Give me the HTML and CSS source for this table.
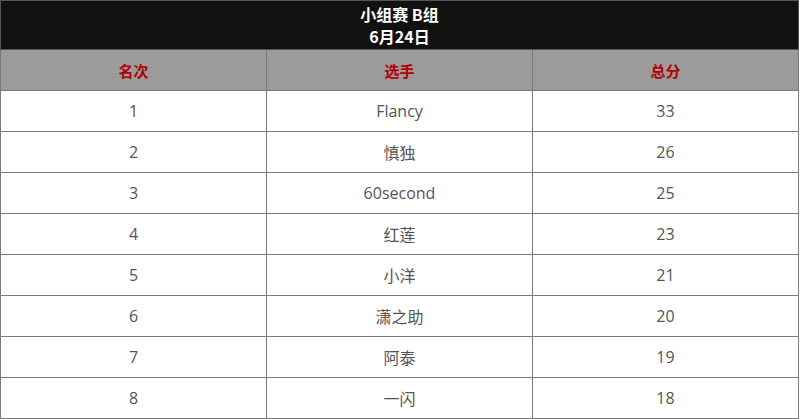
FILE: index.html
```html
<!DOCTYPE html>
<html lang="zh">
<head>
<meta charset="utf-8">
<link rel="stylesheet" href="styles.css">
</head>
<body>
<table class="standings">
  <thead>
    <tr class="title-row"><th colspan="3">小组赛 B组<br>6月24日</th></tr>
    <tr class="col-row"><th>名次</th><th>选手</th><th>总分</th></tr>
  </thead>
  <tbody>
    <tr><td>1</td><td>Flancy</td><td>33</td></tr>
    <tr><td>2</td><td>慎独</td><td>26</td></tr>
    <tr><td>3</td><td>60second</td><td>25</td></tr>
    <tr><td>4</td><td>红莲</td><td>23</td></tr>
    <tr><td>5</td><td>小洋</td><td>21</td></tr>
    <tr><td>6</td><td>潇之助</td><td>20</td></tr>
    <tr><td>7</td><td>阿泰</td><td>19</td></tr>
    <tr><td>8</td><td>一闪</td><td>18</td></tr>
  </tbody>
</table>
</body>
</html>
```
FILE: styles.css
```css
html, body { margin: 0; padding: 0; background: #fff; }
body { font-family: "Open Sans", "Noto Sans CJK SC", sans-serif; }
.standings {
  width: 799px;
  border-collapse: collapse;
  table-layout: fixed;
  border: 1px solid #7a7a7a;
}
.standings th, .standings td {
  border: 1px solid #7a7a7a;
  text-align: center;
  padding: 0;
}
.title-row th {
  background: #111;
  color: #fff;
  font-family: "Noto Sans CJK SC", sans-serif;
  font-weight: 700;
  font-size: 16px;
  line-height: 22px;
  height: 48px;
  padding: 0;
  border-color: #555;
}
.col-row th {
  background: #9b9b9b;
  color: #b00000;
  font-family: "Noto Sans CJK SC", sans-serif;
  font-weight: 700;
  font-size: 15px;
  height: 40px;
  width: 33.33%;
}
.standings td {
  height: 40px;
  color: #555;
  font-size: 16px;
  font-family: "Open Sans", "Noto Sans CJK SC", sans-serif;
}
```
